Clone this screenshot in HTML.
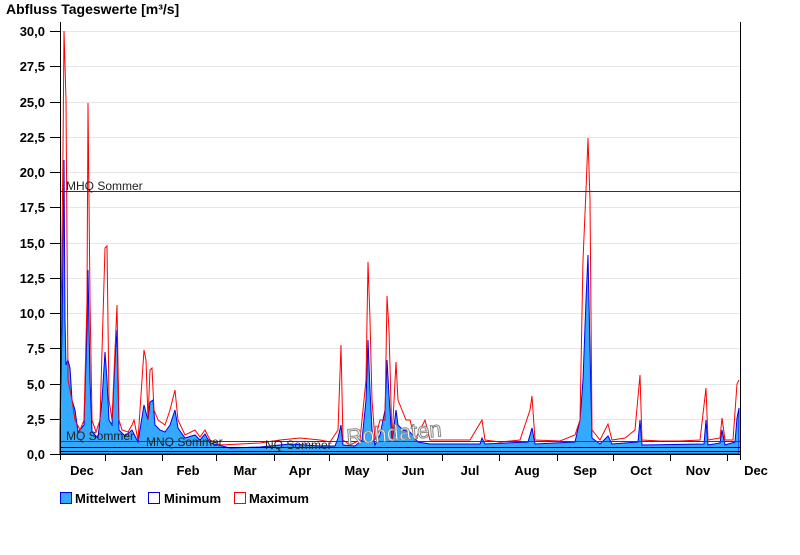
<!DOCTYPE html><html><head><style>body{margin:0;background:#fff;width:800px;height:550px;overflow:hidden}svg{font-family:"Liberation Sans",Arial,sans-serif}</style></head><body>
<svg width="800" height="550" viewBox="0 0 800 550">
<text x="6" y="14" font-size="14" font-weight="bold">Abfluss Tageswerte [m³/s]</text>
<g stroke="#e6e6e6" stroke-width="1">
<line x1="60" y1="31.5" x2="740" y2="31.5"/><line x1="60" y1="66.5" x2="740" y2="66.5"/><line x1="60" y1="102.5" x2="740" y2="102.5"/><line x1="60" y1="137.5" x2="740" y2="137.5"/><line x1="60" y1="172.5" x2="740" y2="172.5"/><line x1="60" y1="207.5" x2="740" y2="207.5"/><line x1="60" y1="243.5" x2="740" y2="243.5"/><line x1="60" y1="278.5" x2="740" y2="278.5"/><line x1="60" y1="313.5" x2="740" y2="313.5"/><line x1="60" y1="348.5" x2="740" y2="348.5"/><line x1="60" y1="384.5" x2="740" y2="384.5"/><line x1="60" y1="419.5" x2="740" y2="419.5"/></g>
<g font-size="13" font-weight="bold" text-anchor="end">
<text x="45" y="36">30,0</text><text x="45" y="71">27,5</text><text x="45" y="107">25,0</text><text x="45" y="142">22,5</text><text x="45" y="177">20,0</text><text x="45" y="212">17,5</text><text x="45" y="248">15,0</text><text x="45" y="283">12,5</text><text x="45" y="318">10,0</text><text x="45" y="353">7,5</text><text x="45" y="389">5,0</text><text x="45" y="424">2,5</text><text x="45" y="459">0,0</text></g>
<g stroke="#000"><line x1="50" y1="31.5" x2="60" y2="31.5"/><line x1="50" y1="66.5" x2="60" y2="66.5"/><line x1="50" y1="102.5" x2="60" y2="102.5"/><line x1="50" y1="137.5" x2="60" y2="137.5"/><line x1="50" y1="172.5" x2="60" y2="172.5"/><line x1="50" y1="207.5" x2="60" y2="207.5"/><line x1="50" y1="243.5" x2="60" y2="243.5"/><line x1="50" y1="278.5" x2="60" y2="278.5"/><line x1="50" y1="313.5" x2="60" y2="313.5"/><line x1="50" y1="348.5" x2="60" y2="348.5"/><line x1="50" y1="384.5" x2="60" y2="384.5"/><line x1="50" y1="419.5" x2="60" y2="419.5"/><line x1="50" y1="454.5" x2="60" y2="454.5"/></g>
<path fill="#33aaff" stroke="#0000ee" stroke-width="1" d="M60,454 L60,430 62,330 64,160 65,320 66,365 68,360 70,368 72,400 75,410 78,432 84,425 87,330 88,270 90,380 92,432 98,438 102,400 105,352 107,380 109,420 112,425 115,360 117,330 119,430 125,436 132,430 138,442 144,405 148,420 150,402 153,400 155,425 160,430 165,432 170,425 175,410 178,428 185,438 195,435 200,440 205,434 210,443 230,448 260,447 290,444 320,446 335,446 338,438 341,425 343,445 355,446 362,440 366,400 368,340 370,390 372,430 375,445 380,435 385,410 387,360 389,395 392,442 396,410 398,425 403,430 410,432 418,442 430,444 480,444 482,438 485,444 528,442 532,428 535,444 575,442 580,420 583,380 586,300 588,255 590,350 592,438 600,444 608,436 612,444 638,442 640,420 642,445 704,444 706,420 708,445 720,443 722,430 725,445 735,442 737,418 739,408 739,454 Z"/>
<polyline fill="none" stroke="#ff0000" stroke-width="1" points="60,420 63,150 64,31 66,100 68,380 72,400 75,420 80,430 84,420 87,300 88,103 90,300 92,420 96,432 100,420 105,248 107,246 109,400 112,420 115,350 117,305 119,420 122,430 128,432 132,425 134,420 138,440 144,350 146,360 148,420 150,370 152,368 154,410 158,420 165,425 170,410 175,390 178,420 185,435 195,430 200,437 205,430 210,440 220,445 240,444 260,443 280,440 300,438 320,440 330,442 338,430 341,345 343,440 350,445 360,440 366,380 368,262 370,320 372,400 375,440 380,420 385,420 387,296 389,330 392,440 396,362 398,400 402,410 406,420 410,420 415,440 420,430 425,420 430,440 440,440 460,440 470,440 482,420 485,440 500,442 520,440 530,410 532,396 535,440 560,441 575,435 580,420 583,260 586,190 588,138 590,200 592,430 600,440 605,430 608,424 612,440 625,438 635,430 640,375 642,440 660,441 680,441 700,440 706,388 708,440 720,438 722,418 725,440 733,440 737,384 739,380"/>
<line x1="60" y1="191.5" x2="740" y2="191.5" stroke="#333"/>
<line x1="60" y1="441.5" x2="740" y2="441.5" stroke="#006600"/>
<line x1="60" y1="447.5" x2="740" y2="447.5" stroke="#000"/>
<line x1="60" y1="451.5" x2="740" y2="451.5" stroke="#000"/>
<g font-size="12" fill="#222"><text x="66" y="190">MHQ Sommer</text><text x="66" y="440">MQ Sommer</text><text x="146" y="446">MNQ Sommer</text><text x="265" y="449">NQ Sommer</text></g>
<text x="346" y="440" font-size="22" fill="#fff" stroke="#888" stroke-width="1" transform="rotate(-5 400 430)">Rohdaten</text>
<line x1="60.5" y1="22" x2="60.5" y2="460" stroke="#000"/>
<line x1="740.5" y1="22" x2="740.5" y2="460" stroke="#000"/>
<line x1="60" y1="454.5" x2="740" y2="454.5" stroke="#000"/>
<g stroke="#000"><line x1="105.5" y1="454" x2="105.5" y2="461"/><line x1="162.5" y1="454" x2="162.5" y2="461"/><line x1="216.5" y1="454" x2="216.5" y2="461"/><line x1="274.5" y1="454" x2="274.5" y2="461"/><line x1="329.5" y1="454" x2="329.5" y2="461"/><line x1="387.5" y1="454" x2="387.5" y2="461"/><line x1="442.5" y1="454" x2="442.5" y2="461"/><line x1="499.5" y1="454" x2="499.5" y2="461"/><line x1="557.5" y1="454" x2="557.5" y2="461"/><line x1="613.5" y1="454" x2="613.5" y2="461"/><line x1="670.5" y1="454" x2="670.5" y2="461"/><line x1="727.5" y1="454" x2="727.5" y2="461"/></g>
<g font-size="13" font-weight="bold" text-anchor="middle"><text x="82" y="475">Dec</text><text x="132" y="475">Jan</text><text x="188" y="475">Feb</text><text x="245" y="475">Mar</text><text x="300" y="475">Apr</text><text x="357" y="475">May</text><text x="413" y="475">Jun</text><text x="470" y="475">Jul</text><text x="527" y="475">Aug</text><text x="585" y="475">Sep</text><text x="641" y="475">Oct</text><text x="698" y="475">Nov</text><text x="756" y="475">Dec</text></g>
<rect x="60.5" y="492.5" width="11" height="11" fill="#33aaff" stroke="#0000ee"/>
<rect x="148.5" y="492.5" width="11" height="11" fill="#fff" stroke="#0000ee"/>
<rect x="234.5" y="492.5" width="11" height="11" fill="#fff" stroke="#ff0000"/>
<g font-size="13" font-weight="bold"><text x="75" y="503">Mittelwert</text><text x="164" y="503">Minimum</text><text x="249" y="503">Maximum</text></g>
</svg></body></html>
